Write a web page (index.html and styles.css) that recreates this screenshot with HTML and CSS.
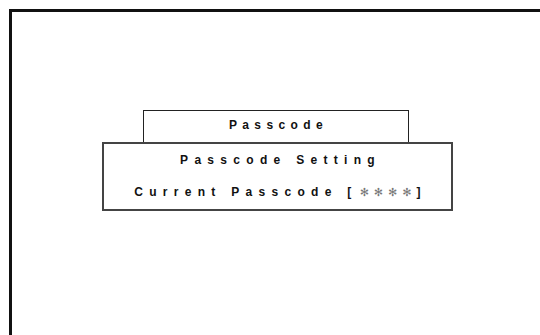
FILE: index.html
```html
<!DOCTYPE html>
<html>
<head>
<meta charset="utf-8">
<link rel="stylesheet" href="styles.css">
</head>
<body>
<div class="frame">
  <div class="dialog">
    <div class="tab">Passcode</div>
    <div class="panel">
      <div class="row">Passcode Setting</div>
      <div class="row">Current Passcode [<span class="stars">✻✻✻✻</span>]</div>
    </div>
  </div>
</div>
</body>
</html>
```
FILE: styles.css
```css
html, body {
  margin: 0;
  padding: 0;
  background: #fff;
  overflow: hidden;
  width: 540px;
  height: 335px;
}
.frame {
  margin: 9px 0 0 9px;
  width: 531px;
  height: 326px;
  border: 3px solid #111;
  border-right: none;
  border-bottom: none;
  box-sizing: border-box;
  padding: 98px 0 0 90px;
  font-family: "Liberation Sans", Arial, sans-serif;
  font-weight: bold;
  font-size: 12px;
  color: #111;
}
.dialog {
  width: 351px;
  display: flex;
  flex-direction: column;
}
.tab {
  margin-left: 41px;
  width: 266px;
  height: 32px;
  box-sizing: border-box;
  border: 1px solid #222;
  border-bottom: none;
  display: flex;
  align-items: center;
  justify-content: center;
  padding: 0 0 3px 5px;
  letter-spacing: 5.4px;
}
.panel {
  height: 69px;
  box-sizing: border-box;
  border: 2px solid #444;
  display: flex;
  flex-direction: column;
  justify-content: center;
  align-items: center;
  gap: 19px;
  padding: 0 0 0 6px;
  letter-spacing: 6.3px;
}
.row {
  line-height: 13px;
  white-space: nowrap;
}
.stars {
  font-family: "DejaVu Sans", sans-serif;
  font-weight: normal;
  font-size: 11px;
  color: #777;
  letter-spacing: 5px;
  padding-left: 2px;
}
```
